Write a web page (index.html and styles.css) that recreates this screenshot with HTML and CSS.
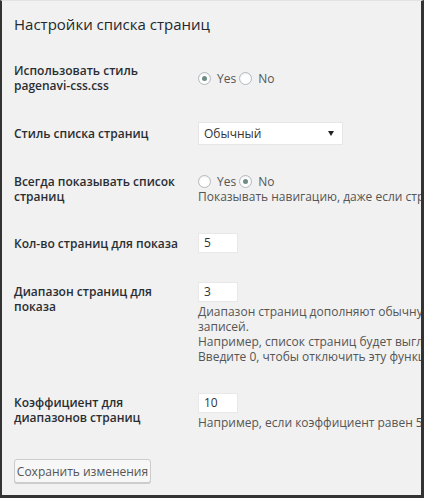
FILE: index.html
```html
<!DOCTYPE html>
<html lang="ru">

<head>
    <meta charset="UTF-8">
    <meta name="viewport" content="width=device-width, initial-scale=1.0">
    <title>Настройки списка страниц</title>
    <link rel="stylesheet" href="styles.css">
</head>

<body>
    <div class="panel">
        <h2 class="title">Настройки списка страниц</h2>

        <div class="form">
            <!-- pagenavi-css -->
            <div class="row middle">
                <div class="label">Использовать стиль<br>pagenavi-css.css</div>
                <div class="field">
                    <div class="choice">
                        <span class="radio checked"></span><span class="opt">Yes</span>
                        <span class="radio"></span><span class="opt">No</span>
                    </div>
                </div>
            </div>

            <div class="row middle">
                <div class="label">Стиль списка страниц</div>
                <div class="field">
                    <div class="select">Обычный<span class="arrow"></span></div>
                </div>
            </div>

            <div class="row">
                <div class="label">Всегда показывать список<br>страниц</div>
                <div class="field">
                    <div class="choice">
                        <span class="radio"></span><span class="opt">Yes</span>
                        <span class="radio checked"></span><span class="opt">No</span>
                    </div>
                    <p class="desc">Показывать навигацию, даже если страница всего одна.</p>
                </div>
            </div>

            <div class="row middle">
                <div class="label">Кол-во страниц для показа</div>
                <div class="field">
                    <div class="input">5</div>
                </div>
            </div>

            <div class="row">
                <div class="label shift">Диапазон страниц для<br>показа</div>
                <div class="field">
                    <div class="input">3</div>
                    <p class="desc">Диапазон страниц дополняют обычную навигацию для большого количества</p>
                    <p class="desc">записей.</p>
                    <p class="desc">Например, список страниц будет выглядеть так: 1 ... 10 20 30</p>
                    <p class="desc">Введите 0, чтобы отключить эту функцию.</p>
                </div>
            </div>

            <div class="row">
                <div class="label shift">Коэффициент для<br>диапазонов страниц</div>
                <div class="field">
                    <div class="input">10</div>
                    <p class="desc">Например, если коэффициент равен 5, то будет показано 5 ссылок.</p>
                </div>
            </div>

            <div class="row">
                <button class="save">Сохранить изменения</button>
            </div>
        </div>
    </div>
</body>

</html>
```

FILE: styles.css
```css
body {
    margin: 0;
    font-family: "Open Sans", "Liberation Sans", sans-serif;
    font-size: 12px;
    line-height: 15px;
    color: #333;
}

.panel {
    width: 424px;
    height: 498px;
    box-sizing: border-box;
    background-color: #f1f1f1;
    border-top: 1px solid #e2e2e2;
    border-left: 2px solid #333;
    border-right: 3px solid #333;
    border-bottom: 3px solid #333;
    padding: 13px 0 0 12px;
    overflow: hidden;
}

.title {
    margin: 0;
    font-size: 15px;
    line-height: 20px;
    font-weight: normal;
    color: #23282d;
}

.form {
    display: flex;
    flex-direction: column;
    gap: 29px;
    margin-top: 29px;
}

.row {
    display: grid;
    grid-template-columns: 184px 400px;
    align-items: start;
}

.row.middle {
    align-items: center;
}

.label {
    font-weight: 600;
    color: #2a2e33;
}

.label.shift {
    padding-top: 2px;
}

.choice {
    display: flex;
    align-items: center;
    height: 15px;
}

.radio {
    width: 13px;
    height: 13px;
    box-sizing: border-box;
    border: 1px solid #b4b9be;
    border-radius: 50%;
    background-color: #fff;
    box-shadow: inset 0 1px 2px rgba(0, 0, 0, 0.07);
    display: flex;
    align-items: center;
    justify-content: center;
}

.radio.checked::after {
    content: "";
    width: 5px;
    height: 5px;
    border-radius: 50%;
    background-color: #6f8c84;
}

.opt {
    margin: 0 3px 0 6px;
    color: #555;
}

.desc {
    margin: 0;
    white-space: nowrap;
    color: #555;
}

.input + .desc {
    margin-top: 2px;
}

.select {
    width: 145px;
    height: 23px;
    box-sizing: border-box;
    background-color: #fff;
    border: 1px solid #e6e6e6;
    padding: 0 8px 0 5px;
    display: flex;
    align-items: center;
    justify-content: space-between;
    color: #333;
}

.arrow {
    width: 0;
    height: 0;
    border-left: 3px solid transparent;
    border-right: 3px solid transparent;
    border-top: 5px solid #222;
}

.input {
    width: 40px;
    height: 20px;
    box-sizing: border-box;
    background-color: #fff;
    border: 1px solid #e8e8e8;
    padding-left: 5px;
    line-height: 18px;
    color: #333;
}

.save {
    width: 137px;
    height: 24px;
    font-family: "Open Sans", "Liberation Sans", sans-serif;
    font-size: 12px;
    white-space: nowrap;
    color: #555;
    background-color: #f7f7f7;
    border: 1px solid #ccc;
    border-radius: 3px;
    box-shadow: 0 1px 0 #ccc;
    padding: 0;
    cursor: pointer;
}
```
